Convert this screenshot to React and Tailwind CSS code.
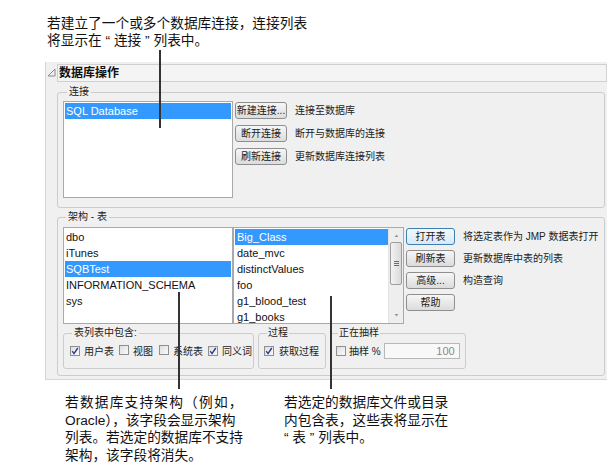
import React from "react";

const btnBase =
  "h-[17px] flex items-center justify-center rounded-[3px] border text-[10px] leading-none text-[#1a1a1a] bg-linear-to-b";
const btnN = btnBase + " border-[#8e8e8e] from-[#f6f6f6] to-[#dcdcdc]";
const btnP = btnBase + " border-[#3c7fb1] from-[#f3f9fd] to-[#d6e9f6]";
const desc = "ml-[8px] text-[10px] leading-none text-[#222] whitespace-nowrap";

function Tri() {
  return (
    <svg width="9" height="9" viewBox="0 0 9 9" className="shrink-0">
      <path d="M8 1 L8 8 L1 8 Z" fill="none" stroke="#8a8a8a" strokeWidth="1" />
    </svg>
  );
}

function Cb({ checked }) {
  return (
    <span className="inline-flex w-[10px] h-[10px] shrink-0 border border-[#8e8f8f] bg-linear-to-br from-[#dedede] to-[#fafafa] items-center justify-center">
      {checked && (
        <svg width="8" height="8" viewBox="0 0 8 8">
          <path d="M1.2 4.2 L3 6.6 L6.8 1" stroke="#2b3990" strokeWidth="1.4" fill="none" />
        </svg>
      )}
    </span>
  );
}

function Row({ children, sel }) {
  return (
    <div
      className={
        sel
          ? "h-[16px] flex items-center bg-[#3399ff] text-white whitespace-nowrap"
          : "h-[16px] flex items-center text-[#111] whitespace-nowrap"
      }
    >
      {children}
    </div>
  );
}

export default function App() {
  return (
    <div className="relative w-[611px] h-[468px] bg-white overflow-hidden text-[#111] [font-family:'Liberation_Sans','Noto_Sans_CJK_SC',sans-serif]">
      {/* top caption */}
      <div className="pl-[47px] pt-[15px] text-[13.7px] leading-[17px]">
        <div>若建立了一个或多个数据库连接，连接列表</div>
        <div>将显示在 “ 连接 ” 列表中。</div>
      </div>

      {/* panel */}
      <div className="ml-[45px] mt-[13px] w-[562px] h-[318px] bg-[#f0f0f0] border-l border-b border-[#d6d6d6] flex flex-col">
        <div className="flex items-center h-[19px] mt-[1px]">
          <div className="ml-[1px]">
            <Tri />
          </div>
          <div className="ml-[1px] flex-1 h-[18px] border border-[#d0d0d0] bg-[#f4f4f4] flex items-center pl-[1px] text-[12px] font-bold leading-none">
            数据库操作
          </div>
        </div>

        {/* 连接 */}
        <fieldset className="ml-[11px] mr-[2px] mt-[4px] border border-[#c9cdd0] rounded-[3px] pl-[5px] pt-[3px] pb-[9px] min-w-0">
          <legend className="ml-[4px] px-[2px] text-[10px] leading-[12px] text-[#222]">连接</legend>
          <div className="flex">
            <div className="w-[170px] h-[97px] bg-white border border-[#a9a9a9] text-[11px] pt-px px-px">
              <Row sel>
                <span className="pl-[1px]">SQL Database</span>
              </Row>
            </div>
            <div className="ml-[2px] mt-[1px] flex flex-col gap-[6px]">
              <div className="flex items-center">
                <div className={btnN + " w-[52px]"}>新建连接...</div>
                <span className={desc}>连接至数据库</span>
              </div>
              <div className="flex items-center">
                <div className={btnN + " w-[52px]"}>断开连接</div>
                <span className={desc}>断开与数据库的连接</span>
              </div>
              <div className="flex items-center">
                <div className={btnN + " w-[52px]"}>刷新连接</div>
                <span className={desc}>更新数据库连接列表</span>
              </div>
            </div>
          </div>
        </fieldset>

        {/* 架构 - 表 */}
        <fieldset className="ml-[11px] mr-[2px] mt-[3px] border border-[#c9cdd0] rounded-[3px] pl-[5px] pt-[4px] pb-[6px] min-w-0">
          <legend className="ml-[3px] px-[2px] text-[10px] leading-[12px] text-[#222]">架构 - 表</legend>
          <div className="flex">
            <div className="w-[170px] h-[97px] bg-white border border-[#a9a9a9] text-[11px] pt-px px-px">
              <Row>
                <span className="pl-[1px]">dbo</span>
              </Row>
              <Row>
                <span className="pl-[1px]">iTunes</span>
              </Row>
              <Row sel>
                <span className="pl-[1px]">SQBTest</span>
              </Row>
              <Row>
                <span className="pl-[1px]">INFORMATION_SCHEMA</span>
              </Row>
              <Row>
                <span className="pl-[1px]">sys</span>
              </Row>
            </div>
            <div className="w-[171px] h-[97px] bg-white border border-[#a9a9a9] text-[11px] flex">
              <div className="flex-1 overflow-hidden pt-px pl-px">
                <Row sel>
                  <span className="pl-[2px]">Big_Class</span>
                </Row>
                <Row>
                  <span className="pl-[2px]">date_mvc</span>
                </Row>
                <Row>
                  <span className="pl-[2px]">distinctValues</span>
                </Row>
                <Row>
                  <span className="pl-[2px]">foo</span>
                </Row>
                <Row>
                  <span className="pl-[2px]">g1_blood_test</span>
                </Row>
                <Row>
                  <span className="pl-[2px]">g1_books</span>
                </Row>
              </div>
              <div className="w-[15px] h-full bg-[#eeeeee] border-l border-[#e2e2e2] flex flex-col items-center">
                <svg width="7" height="14" viewBox="0 0 7 14">
                  <path d="M1.5 9 L3.5 6.5 L5.5 9 Z" fill="#9a9a9a" />
                </svg>
                <div className="w-[12px] h-[43px] rounded-[2px] border border-[#9e9e9e] bg-linear-to-r from-[#f3f3f3] to-[#d9d9d9] flex flex-col items-center justify-center gap-[1px]">
                  <div className="w-[5px] h-px bg-[#6b6b6b]" />
                  <div className="w-[5px] h-px bg-[#6b6b6b]" />
                  <div className="w-[5px] h-px bg-[#6b6b6b]" />
                </div>
                <div className="flex-1" />
                <svg width="7" height="14" viewBox="0 0 7 14">
                  <path d="M1.5 5 L3.5 7.5 L5.5 5 Z" fill="#9a9a9a" />
                </svg>
              </div>
            </div>
            <div className="ml-[2px] mt-[1px] flex flex-col gap-[5px]">
              <div className="flex items-center">
                <div className={btnP + " w-[49px]"}>打开表</div>
                <span className={desc}>将选定表作为 JMP 数据表打开</span>
              </div>
              <div className="flex items-center">
                <div className={btnN + " w-[49px]"}>刷新表</div>
                <span className={desc}>更新数据库中表的列表</span>
              </div>
              <div className="flex items-center">
                <div className={btnN + " w-[49px]"}>高级...</div>
                <span className={desc}>构造查询</span>
              </div>
              <div className="flex items-center">
                <div className={btnN + " w-[49px]"}>帮助</div>
              </div>
            </div>
          </div>

          {/* bottom option groups */}
          <div className="flex mt-[3px] text-[10px] text-[#222]">
            <fieldset className="w-[191px] border border-[#c9cdd0] rounded-[3px] pl-[6px] pt-[4px] pb-[9px] min-w-0">
              <legend className="ml-[2px] px-[2px] leading-[12px]">表列表中包含:</legend>
              <div className="h-[16px] flex items-center">
                <Cb checked />
                <span className="ml-[4px]">用户表</span>
                <span className="ml-[5px]">
                  <Cb />
                </span>
                <span className="ml-[4px]">视图</span>
                <span className="ml-[6px]">
                  <Cb />
                </span>
                <span className="ml-[4px]">系统表</span>
                <span className="ml-[5px]">
                  <Cb checked />
                </span>
                <span className="ml-[4px]">同义词</span>
              </div>
            </fieldset>
            <fieldset className="ml-[4px] w-[68px] border border-[#c9cdd0] rounded-[3px] pl-[5px] pt-[4px] pb-[9px] min-w-0">
              <legend className="ml-[3px] px-[1px] leading-[12px]">过程</legend>
              <div className="h-[16px] flex items-center">
                <Cb checked />
                <span className="ml-[5px]">获取过程</span>
              </div>
            </fieldset>
            <fieldset className="ml-[4px] w-[136px] border border-[#c9cdd0] rounded-[3px] pl-[5px] pt-[4px] pb-[9px] min-w-0">
              <legend className="ml-[2px] px-[1px] leading-[12px]">正在抽样</legend>
              <div className="h-[16px] flex items-center">
                <Cb />
                <span className="ml-[3px]">抽样 %</span>
                <div className="ml-[3px] w-[76px] h-[16px] border border-[#b8b8b8] bg-[#f8f8f8] text-[11px] text-[#8a8a8a] flex items-center justify-end pr-[4px] leading-none">
                  100
                </div>
              </div>
            </fieldset>
          </div>
        </fieldset>
      </div>

      {/* bottom captions */}
      <div className="flex mt-[14px] text-[13.7px] leading-[17.6px]">
        <div className="ml-[65px] w-[219px]">
          <div className="tracking-[1.2px]">若数据库支持架构（例如，</div>
          <div>Oracle），该字段会显示架构</div>
          <div>列表。若选定的数据库不支持</div>
          <div>架构，该字段将消失。</div>
        </div>
        <div>
          <div>若选定的数据库文件或目录</div>
          <div>内包含表，这些表将显示在</div>
          <div>“ 表 ” 列表中。</div>
        </div>
      </div>

      {/* callout lines */}
      <div className="absolute left-[159px] top-[50px] w-[1.5px] h-[78px] bg-[#333]" />
      <div className="absolute left-[178px] top-[292px] w-[1.5px] h-[97px] bg-[#333]" />
      <div className="absolute left-[330px] top-[296px] w-[1.5px] h-[93px] bg-[#333]" />
    </div>
  );
}
